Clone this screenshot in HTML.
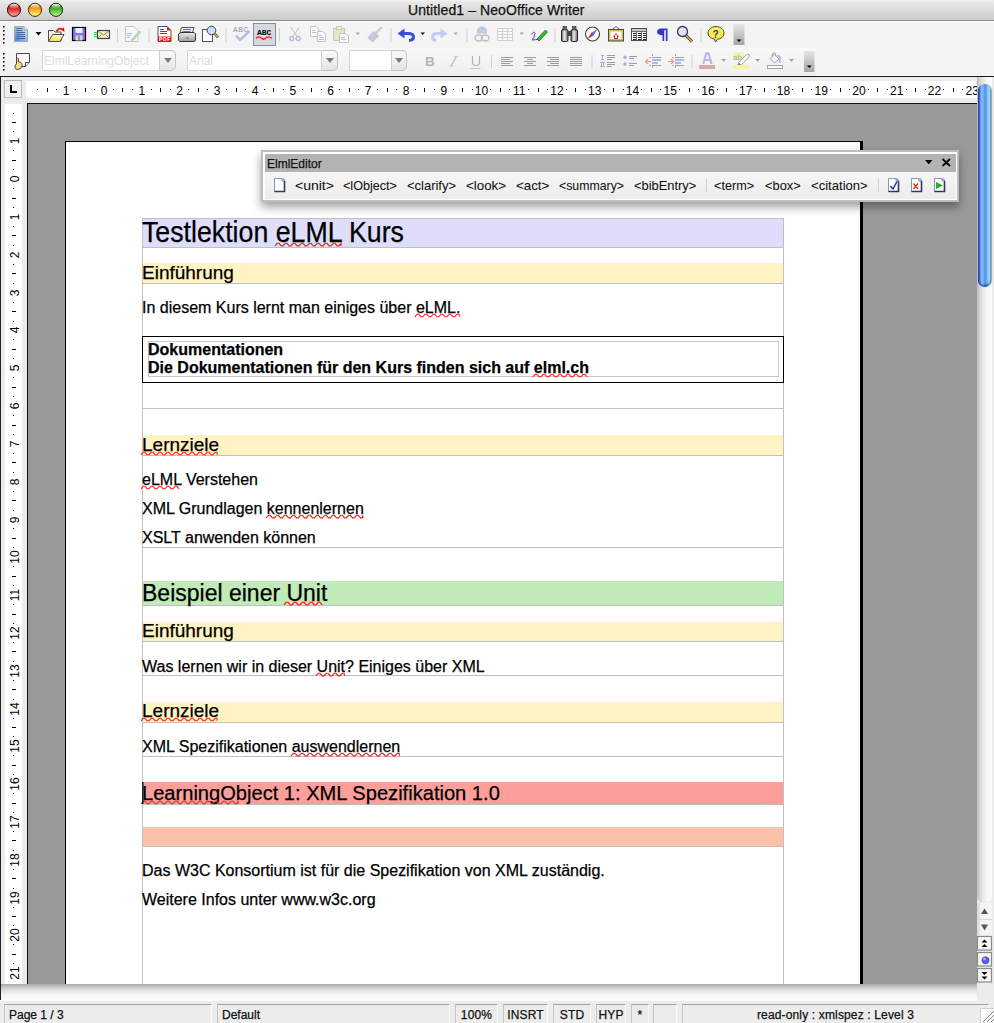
<!DOCTYPE html><html><head><meta charset="utf-8"><style>
*{box-sizing:border-box}
body{margin:0;width:994px;height:1023px;overflow:hidden;position:relative;background:#ececec;font-family:"Liberation Sans",sans-serif;color:#000}
.ab{position:absolute}
.t{position:absolute;white-space:pre;line-height:1;-webkit-text-stroke:0.25px currentColor}
</style></head><body>

<div class="ab" style="left:0;top:0;width:994px;height:20px;border-radius:5px 5px 0 0;background:linear-gradient(#f3f3f3 0,#e8e8e8 2px,#cdcdcd 19px)"></div>
<div class="ab" style="left:0;top:20px;width:994px;height:1px;background:#8a8a8a"></div>
<svg class="ab" style="left:0;top:0" width="70" height="20" viewBox="0 0 70 20"><defs><linearGradient id="tlr" x1="0" y1="0" x2="0" y2="1"><stop offset="0" stop-color="#a01010"/><stop offset=".45" stop-color="#d83030"/><stop offset="1" stop-color="#ffb0a0"/></linearGradient><linearGradient id="tlo" x1="0" y1="0" x2="0" y2="1"><stop offset="0" stop-color="#b05a00"/><stop offset=".45" stop-color="#f0a020"/><stop offset="1" stop-color="#ffff80"/></linearGradient><linearGradient id="tlg" x1="0" y1="0" x2="0" y2="1"><stop offset="0" stop-color="#1a6a10"/><stop offset=".45" stop-color="#48b030"/><stop offset="1" stop-color="#c0ff90"/></linearGradient><linearGradient id="tlh" x1="0" y1="0" x2="0" y2="1"><stop offset="0" stop-color="#fff" stop-opacity=".95"/><stop offset="1" stop-color="#fff" stop-opacity="0"/></linearGradient></defs><circle cx="14" cy="9.8" r="6.6" fill="url(#tlr)" stroke="#3a0404" stroke-width="1"/><ellipse cx="14" cy="6.3" rx="4.2" ry="2.6" fill="url(#tlh)"/><circle cx="35" cy="9.8" r="6.6" fill="url(#tlo)" stroke="#4a2400" stroke-width="1"/><ellipse cx="35" cy="6.3" rx="4.2" ry="2.6" fill="url(#tlh)"/><circle cx="56" cy="9.8" r="6.6" fill="url(#tlg)" stroke="#083006" stroke-width="1"/><ellipse cx="56" cy="6.3" rx="4.2" ry="2.6" fill="url(#tlh)"/></svg>
<div class="t" style="left:408px;top:3px;font-size:14px;letter-spacing:0.1px;color:#111">Untitled1 – NeoOffice Writer</div>
<div class="ab" style="left:0;top:21px;width:994px;height:55px;background:#f4f4f4;border-top:1px solid #fdfdfd"></div>
<div class="ab" style="left:0;top:48px;width:816px;height:28px;background:linear-gradient(#f8f8f8,#efefef)"></div>
<div class="ab" style="left:0;top:76px;width:994px;height:1px;background:#1a1a1a"></div>
<div class="ab" style="left:42px;top:50px;width:134px;height:21px;background:#fff;border:1px solid #d4d4d4;border-radius:0 5px 5px 0"></div>
<div class="ab" style="left:159px;top:50px;width:17px;height:21px;background:linear-gradient(#fafafa,#e4e4e4);border:1px solid #c4c4c4;border-left:1px solid #cfcfcf;border-radius:0 5px 5px 0"></div>
<div class="ab" style="left:163.5px;top:58px;width:0;height:0;border-left:4px solid transparent;border-right:4px solid transparent;border-top:5px solid #7a7a7a"></div>
<div class="t" style="left:44px;top:55px;font-size:12px;color:#dcdcdc;-webkit-text-stroke:0">ElmlLearningObject</div>
<div class="ab" style="left:187px;top:50px;width:151px;height:21px;background:#fff;border:1px solid #d4d4d4;border-radius:0 5px 5px 0"></div>
<div class="ab" style="left:321px;top:50px;width:17px;height:21px;background:linear-gradient(#fafafa,#e4e4e4);border:1px solid #c4c4c4;border-left:1px solid #cfcfcf;border-radius:0 5px 5px 0"></div>
<div class="ab" style="left:325.5px;top:58px;width:0;height:0;border-left:4px solid transparent;border-right:4px solid transparent;border-top:5px solid #7a7a7a"></div>
<div class="t" style="left:189px;top:55px;font-size:12px;color:#dcdcdc;-webkit-text-stroke:0">Arial</div>
<div class="ab" style="left:349px;top:50px;width:58px;height:21px;background:#fff;border:1px solid #d4d4d4;border-radius:0 5px 5px 0"></div>
<div class="ab" style="left:391px;top:50px;width:16px;height:21px;background:linear-gradient(#fafafa,#e4e4e4);border:1px solid #c4c4c4;border-left:1px solid #cfcfcf;border-radius:0 5px 5px 0"></div>
<div class="ab" style="left:395.0px;top:58px;width:0;height:0;border-left:4px solid transparent;border-right:4px solid transparent;border-top:5px solid #7a7a7a"></div>
<svg class="ab" style="left:0;top:0" width="994" height="80" viewBox="0 0 994 80"><defs>
<linearGradient id="gNew" x1="1" y1="0" x2="0" y2="1"><stop offset="0" stop-color="#e4ecfa"/><stop offset="1" stop-color="#3f86f2"/></linearGradient>
<linearGradient id="gFold" x1="0" y1="0" x2="0" y2="1"><stop offset="0" stop-color="#fbf6c8"/><stop offset="1" stop-color="#efe060"/></linearGradient>
<linearGradient id="gBin" x1="0" y1="0" x2="1" y2="0"><stop offset="0" stop-color="#666"/><stop offset=".45" stop-color="#e8e8ec"/><stop offset="1" stop-color="#707078"/></linearGradient>
<linearGradient id="gOv" x1="0" y1="0" x2="0" y2="1"><stop offset="0" stop-color="#e6e6e6"/><stop offset="1" stop-color="#a4a4a4"/></linearGradient>
<linearGradient id="gPr" x1="0" y1="0" x2="0" y2="1"><stop offset="0" stop-color="#f0f0f4"/><stop offset="1" stop-color="#9a9aa4"/></linearGradient>
</defs><rect x="3" y="26" width="1.6" height="1.6" fill="#111"/><rect x="3" y="30" width="1.6" height="1.6" fill="#111"/><rect x="3" y="34" width="1.6" height="1.6" fill="#111"/><rect x="3" y="38" width="1.6" height="1.6" fill="#111"/><rect x="3" y="42" width="1.6" height="1.6" fill="#111"/><rect x="3" y="53" width="1.6" height="1.6" fill="#111"/><rect x="3" y="57" width="1.6" height="1.6" fill="#111"/><rect x="3" y="61" width="1.6" height="1.6" fill="#111"/><rect x="3" y="65" width="1.6" height="1.6" fill="#111"/><rect x="3" y="69" width="1.6" height="1.6" fill="#111"/><rect x="117" y="28" width="1" height="14" fill="#cfcfcf"/><rect x="148.5" y="28" width="1" height="14" fill="#cfcfcf"/><rect x="225.5" y="28" width="1" height="14" fill="#cfcfcf"/><rect x="279" y="28" width="1" height="14" fill="#cfcfcf"/><rect x="390.5" y="28" width="1" height="14" fill="#cfcfcf"/><rect x="466.5" y="28" width="1" height="14" fill="#cfcfcf"/><rect x="554.5" y="28" width="1" height="14" fill="#cfcfcf"/><rect x="700.5" y="28" width="1" height="14" fill="#cfcfcf"/><rect x="491" y="55" width="1" height="13" fill="#cfcfcf"/><rect x="591.5" y="55" width="1" height="13" fill="#cfcfcf"/><rect x="691.5" y="55" width="1" height="13" fill="#cfcfcf"/><path d="M14.5 26.5H24L27.5 30V41.5H14.5Z" fill="url(#gNew)" stroke="#a4a4a4"/><path d="M24 26.5V30H27.5" fill="#e8e8e8" stroke="#a4a4a4"/><path d="M16.5 28.5H22.5" stroke="#1e2a50" stroke-width="1" opacity=".6"/><path d="M16.5 30.5H22.5" stroke="#1e2a50" stroke-width="1" opacity=".6"/><path d="M16.5 32.5H25" stroke="#1e2a50" stroke-width="1" opacity=".6"/><path d="M16.5 34.5H25" stroke="#1e2a50" stroke-width="1" opacity=".6"/><path d="M16.5 36.5H25" stroke="#1e2a50" stroke-width="1" opacity=".6"/><path d="M16.5 38.5H25" stroke="#1e2a50" stroke-width="1" opacity=".6"/><path d="M35.5 32H41.5L38.5 35.5Z" fill="#000"/><path d="M48.5 30.5h5l1.5 1.5h6v9h-12.5z" fill="#fbf6d0" stroke="#4a4a60"/><path d="M48.5 41.5L52.5 34.5H64L60 41.5Z" fill="url(#gFold)" stroke="#4a4a60"/><path d="M56.5 31.5Q59.5 26.5 62.5 30" stroke="#e01010" stroke-width="1.6" fill="none"/><path d="M60.5 29.5L64.5 32L64 27.5Z" fill="#e01010"/><rect x="72.5" y="27.5" width="13" height="13" fill="#7a78ee" stroke="#000" stroke-width="1.2"/><rect x="75.5" y="28" width="7" height="5" fill="#eeeeee"/><rect x="75.5" y="35.5" width="7" height="5" fill="#d8d8d8"/><rect x="78.5" y="36" width="1" height="4.5" fill="#555"/><rect x="97.5" y="30.5" width="12" height="8" fill="#f6f2c0" stroke="#40445a" stroke-width="1.2"/><path d="M97.5 30.5L103.5 35L109.5 30.5M97.5 38.5L101.5 34.5M109.5 38.5L105.5 34.5" stroke="#70705a" fill="none" stroke-width=".8"/><path d="M94 32.5h3M94 34.5h3M94 36.5h3" stroke="#22dd22" stroke-width="1.2"/><path d="M125.5 26.5H134L138 30.5V41.5H125.5Z" fill="#f7f7f7" stroke="#c4c4c4"/><path d="M127 33.5H132M127 35.5H131M127 37.5H130" stroke="#b8b8e4" stroke-width="1"/><path d="M131 40L139.5 31L140.8 32.3L132.3 41.3Z" fill="#a4e0a4" stroke="#b8c8b8" stroke-width=".8"/><path d="M158 26.5H167L171 30.5V41.5H158Z" fill="#fff" stroke="#505060"/><path d="M167 26.5L171 30.5H167Z" fill="#d81818"/><path d="M160 29.5h4M160 31.5h7M160 33.5h7" stroke="#4444cc" stroke-width="1"/><rect x="158" y="36.5" width="13" height="5" fill="#e81010"/><text x="159" y="41" font-family="Liberation Sans" font-weight="bold" font-size="5" fill="#fff" letter-spacing=".6">PDF</text><path d="M181.5 27.5H194L192.5 32.5H180Z" fill="#eef0ff" stroke="#404050" stroke-width=".9"/><path d="M183 29.5h8M182.5 31.5h8" stroke="#4444cc" stroke-width=".8"/><path d="M178.5 34L181 32.5H194L195.5 34V40.5L194 41.5H179.5L178.5 40.5Z" fill="url(#gPr)" stroke="#333" stroke-width="1"/><rect x="186.5" y="37" width="2" height="1.6" fill="#10c010"/><rect x="202.5" y="29.5" width="10" height="12" fill="#fff" stroke="#555"/><path d="M214.5 33.5L218 37.5" stroke="#444" stroke-width="2.6"/><path d="M214.5 33.5L218 37.5" stroke="#e0a030" stroke-width="1.4"/><circle cx="211.5" cy="30.5" r="4.3" fill="#cfdcff" stroke="#445" stroke-width="1"/><text x="233" y="31.5" font-family="Liberation Sans" font-weight="bold" font-size="6.5" fill="#a8a8a8" letter-spacing=".5">ABC</text><path d="M236 35.5L240 40L249.5 31" stroke="#b8b8e8" stroke-width="2.6" fill="none"/><rect x="253.5" y="23.5" width="22" height="22" fill="#d6d9df" stroke="#8090a8" stroke-width="1"/><text x="257" y="35" font-family="Liberation Mono" font-weight="bold" font-size="8" fill="#000">ABC</text><path d="M256 38.5Q258.5 35.5 261 38Q263.5 40.5 266 38Q268.5 35.5 272 38.5" stroke="#ff1010" stroke-width="1.2" fill="none"/><path d="M290.5 27L297.5 37M299.5 27L292.5 37" stroke="#c8c8c8" stroke-width="1.2"/><circle cx="291.8" cy="38.5" r="2" fill="none" stroke="#b8b8e4" stroke-width="1.4"/><circle cx="298.2" cy="38.5" r="2" fill="none" stroke="#b8b8e4" stroke-width="1.4"/><path d="M310.5 26.5H316L318.5 29V36.5H310.5Z" fill="#fafafa" stroke="#c4c4c4"/><path d="M312 30.5h3M312 32.5h4" stroke="#b8b8e4"/><path d="M317.5 31.5H323L325.5 34V41.5H317.5Z" fill="#fafafa" stroke="#c4c4c4"/><path d="M319 35.5h3M319 37.5h5M319 39.5h5" stroke="#b8b8e4"/><rect x="333.5" y="28.5" width="11" height="12" fill="#e9e1c9" stroke="#cfc7b0"/><rect x="336.5" y="26.5" width="5" height="3" fill="#f4eed8" stroke="#cfc7b0"/><path d="M339.5 33.5H346L348.5 36V42.5H339.5Z" fill="#fafafa" stroke="#c4c4c4"/><path d="M341 37.5h4M341 39.5h5" stroke="#b8b8e4"/><path d="M355.5 32.5H360L357.75 35Z" fill="#a8a8a8"/><path d="M376 33L382 27" stroke="#d4ccb0" stroke-width="2.2"/><path d="M368 37.5L374 31.5L378.5 36L372.5 42Z" fill="#c4c8e8" stroke="#b8b8c4" stroke-width=".8"/><path d="M404.5 28.5L397.5 33.5L404.5 38.5Z" fill="#3d4fd6"/><path d="M403 33.5H408Q413.5 33.5 413.5 37Q413.5 40 409 40.5" stroke="#3d4fd6" stroke-width="3" fill="none"/><path d="M420.5 32.5H425L422.75 35Z" fill="#000"/><path d="M440.5 28.5L447.5 33.5L440.5 38.5Z" fill="#c4caf2"/><path d="M442 33.5H437Q432.5 33.5 432.5 37Q432.5 40 436 40.5" stroke="#c4caf2" stroke-width="3" fill="none"/><path d="M453.5 32.5H458L455.75 35Z" fill="#a8a8a8"/><path d="M477 33.5V31.5A5 5 0 0 1 487 31.5V33.5Z" fill="#c4bcec"/><path d="M479 28.5L483 32M481 33L485 29.5" stroke="#a8f0b0" stroke-width="1.2"/><ellipse cx="478.8" cy="38" rx="3.8" ry="3" fill="none" stroke="#c0c0c0" stroke-width="1.5"/><ellipse cx="485.2" cy="38" rx="3.8" ry="3" fill="none" stroke="#c0c0c0" stroke-width="1.5"/><rect x="497.5" y="28.5" width="15" height="12" fill="#fafafa" stroke="#d0d0d0"/><path d="M497.5 31.5h15M497.5 34.5h15M497.5 37.5h15M502.5 28.5v12M507.5 28.5v12" stroke="#d0d0d0"/><path d="M519.5 32.5H524L521.75 35Z" fill="#a0a0a0"/><path d="M537 39L545.5 30L547.5 32L539 41Z" fill="#30c030" stroke="#186018" stroke-width=".8"/><path d="M531.5 34.5Q534 30.5 535 33.5Q534 38.5 532 40Q536 40 538 39" stroke="#5038c0" stroke-width="1" fill="none"/><rect x="561.5" y="29.5" width="6.5" height="12" rx="1.5" fill="url(#gBin)" stroke="#222"/><rect x="571" y="29.5" width="6.5" height="12" rx="1.5" fill="url(#gBin)" stroke="#222"/><rect x="563" y="26.5" width="3.5" height="3.5" fill="#666" stroke="#222" stroke-width=".6"/><rect x="572.5" y="26.5" width="3.5" height="3.5" fill="#666" stroke="#222" stroke-width=".6"/><rect x="567.5" y="31" width="4" height="5" fill="#444"/><circle cx="592.5" cy="34" r="7" fill="#fff" stroke="#3a3a4a" stroke-width="1.1"/><path d="M587.5 39L591.5 32.5L594 35Z" fill="#e82020"/><path d="M597.5 29L593.5 35.5L591 33Z" fill="#6070f0"/><path d="M612 29.5L616 26.5L620 29.5" stroke="#555" fill="none" stroke-width=".8"/><rect x="608.5" y="29.5" width="15" height="11.5" fill="#dcbc50" stroke="#4a4a40"/><rect x="610.5" y="31.5" width="11" height="7.5" fill="#fff"/><path d="M613.5 36.5L616 33.5L618.5 36.5M614.5 36v2.5h3V36" stroke="#d02020" fill="none" stroke-width="1"/><rect x="631.5" y="28.5" width="15" height="12" fill="#fff" stroke="#4a4a58"/><rect x="632" y="29" width="14" height="2" fill="#c8c8d4"/><path d="M631.5 31.5h15M636.5 31.5v9M641.5 31.5v9" stroke="#6a6a78" stroke-width="1"/><rect x="633" y="33" width="3" height="1" fill="#222"/><rect x="638" y="33" width="3" height="1" fill="#222"/><rect x="643" y="33" width="3" height="1" fill="#222"/><rect x="633" y="35" width="3" height="1" fill="#222"/><rect x="638" y="35" width="3" height="1" fill="#222"/><rect x="643" y="35" width="3" height="1" fill="#222"/><rect x="633" y="37" width="3" height="1" fill="#222"/><rect x="638" y="37" width="3" height="1" fill="#222"/><rect x="643" y="37" width="3" height="1" fill="#222"/><rect x="633" y="39" width="3" height="1" fill="#222"/><rect x="638" y="39" width="3" height="1" fill="#222"/><rect x="643" y="39" width="3" height="1" fill="#222"/><path d="M661 28.5H667.5V41H665.8V30.2H664.2V41H662.5V35.2C659.3 35.2 657 33.8 657 31.9C657 29.8 658.6 28.5 661 28.5Z" fill="#3535c8"/><path d="M686 35.5L692 41.5" stroke="#444" stroke-width="3"/><path d="M686 35.5L692 41.5" stroke="#e8a030" stroke-width="1.6"/><circle cx="682.5" cy="31.5" r="5" fill="#dae4ff" stroke="#3a3a4a" stroke-width="1.3"/><path d="M716 26.5C720.5 26.5 724 29.5 724 33C724 36.5 721 39 717.5 39.2L715.5 42L714.5 39C710.5 38.5 708 36 708 33C708 29.5 711.5 26.5 716 26.5Z" fill="#f6f040" stroke="#333" stroke-width=".9"/><text x="712.5" y="37.5" font-family="Liberation Sans" font-weight="bold" font-size="10" fill="#3030c0">?</text><rect x="733.5" y="24" width="11" height="21" fill="url(#gOv)"/><path d="M736.5 39.5H741.5L739 42Z" fill="#000"/><path d="M16.5 53.5H29.5V62.5L25.5 66.5H16.5Z" fill="#fff" stroke="#4a4a5a"/><path d="M25.5 66.5V62.5H29.5" stroke="#4a4a5a" fill="#e8e8f0"/><path d="M17 69.5C15.5 69 14.5 67.5 15 66L16.5 63.5V58.5Q17.5 57.5 18.5 58.5V62L21 62.5Q22.5 63.5 22 66Q21.5 69.5 17 69.5Z" fill="#f8d888" stroke="#332a10" stroke-width=".8"/><text x="425" y="66" font-family="Liberation Sans" font-weight="bold" font-size="13.5" fill="#b4b4b4">B</text><path d="M456.5 56.5L451 66" stroke="#b4b4b4" stroke-width="1.2"/><path d="M453.5 56.5h5M449 66h5" stroke="#c8c8c8" stroke-width=".8"/><path d="M472.5 56v6q0 3.5 3.5 3.5t3.5-3.5v-6" fill="none" stroke="#b4b4b4" stroke-width="1.2"/><path d="M470.5 68.5h10" stroke="#c8c8c8" stroke-width="1"/><rect x="501" y="57" width="12" height="1" fill="#9c9c9c"/><rect x="501" y="59" width="9" height="1" fill="#9c9c9c"/><rect x="501" y="61" width="12" height="1" fill="#9c9c9c"/><rect x="501" y="63" width="9" height="1" fill="#9c9c9c"/><rect x="501" y="65" width="12" height="1" fill="#9c9c9c"/><rect x="524" y="57" width="12" height="1" fill="#9c9c9c"/><rect x="527" y="59" width="6" height="1" fill="#9c9c9c"/><rect x="524" y="61" width="12" height="1" fill="#9c9c9c"/><rect x="527" y="63" width="6" height="1" fill="#9c9c9c"/><rect x="524" y="65" width="12" height="1" fill="#9c9c9c"/><rect x="547" y="57" width="12" height="1" fill="#9c9c9c"/><rect x="550" y="59" width="9" height="1" fill="#9c9c9c"/><rect x="547" y="61" width="12" height="1" fill="#9c9c9c"/><rect x="550" y="63" width="9" height="1" fill="#9c9c9c"/><rect x="547" y="65" width="12" height="1" fill="#9c9c9c"/><rect x="570" y="57" width="12" height="1" fill="#9c9c9c"/><rect x="570" y="59" width="12" height="1" fill="#9c9c9c"/><rect x="570" y="61" width="12" height="1" fill="#9c9c9c"/><rect x="570" y="63" width="12" height="1" fill="#9c9c9c"/><rect x="570" y="65" width="12" height="1" fill="#9c9c9c"/><path d="M601 55.5h3M602.5 55.5v4M601 59.5h3" stroke="#b4a8e0" stroke-width="1" fill="none"/><path d="M600 62.5h5M601.5 62.5v4M603.5 62.5v4M600 66.5h5" stroke="#b4a8e0" stroke-width="1" fill="none"/><rect x="607" y="55" width="8" height="1" fill="#9c9c9c"/><rect x="607" y="57" width="8" height="1" fill="#9c9c9c"/><rect x="607" y="59" width="5" height="1" fill="#9c9c9c"/><rect x="607" y="62" width="8" height="1" fill="#9c9c9c"/><rect x="607" y="64" width="8" height="1" fill="#9c9c9c"/><rect x="607" y="66" width="5" height="1" fill="#9c9c9c"/><circle cx="625" cy="57.2" r="1.7" fill="#b0a8e4"/><circle cx="625" cy="64" r="1.7" fill="#b0a8e4"/><rect x="629" y="56" width="8" height="1" fill="#9c9c9c"/><rect x="629" y="58" width="5" height="1" fill="#9c9c9c"/><rect x="629" y="63" width="8" height="1" fill="#9c9c9c"/><rect x="629" y="65" width="5" height="1" fill="#9c9c9c"/><rect x="652" y="54" width="1" height="2" fill="#a8a8a8"/><rect x="652" y="66" width="1" height="2" fill="#a8a8a8"/><rect x="649" y="57" width="2" height="1" fill="#b0b0b0"/><rect x="652" y="57" width="9" height="1" fill="#a0a0a0"/><rect x="652" y="59" width="9" height="2" fill="#b8b4ec"/><rect x="652" y="62" width="6" height="2" fill="#b8b4ec"/><rect x="649" y="65" width="2" height="1" fill="#b0b0b0"/><rect x="652" y="65" width="9" height="1" fill="#a0a0a0"/><rect x="675" y="54" width="1" height="2" fill="#a8a8a8"/><rect x="675" y="66" width="1" height="2" fill="#a8a8a8"/><rect x="672" y="57" width="2" height="1" fill="#b0b0b0"/><rect x="675" y="57" width="9" height="1" fill="#a0a0a0"/><rect x="675" y="59" width="9" height="2" fill="#b8b4ec"/><rect x="675" y="62" width="6" height="2" fill="#b8b4ec"/><rect x="672" y="65" width="2" height="1" fill="#b0b0b0"/><rect x="675" y="65" width="9" height="1" fill="#a0a0a0"/><path d="M645.5 61.5H651M648 59L645.5 61.5L648 64" stroke="#f09090" stroke-width="1.1" fill="none"/><path d="M668 61.5H673.5M671 59L673.5 61.5L671 64" stroke="#f09090" stroke-width="1.1" fill="none"/><path d="M703.2 64L706.2 53.5H708.6L711.6 64M704.6 60H710.2" stroke="#b8b4ec" stroke-width="2" fill="none"/><path d="M705 53.5h4.5" stroke="#b8b4ec" stroke-width="1.5"/><rect x="699" y="65" width="16" height="4" fill="#d8a8a8"/><path d="M721 59H726.2L723.6 61.8Z" fill="#a0a0a0"/><rect x="733" y="52.5" width="11" height="7.5" fill="#f4f2a8"/><text x="733" y="59.5" font-family="Liberation Sans" font-size="8" fill="#a8a8a8">ab</text><path d="M738.5 62.5L746.5 54.5Q748 53.5 749.2 54.8Q750 56 749 57.2L741 65.2Z" fill="#f8f8f8" stroke="#a8a8a8" stroke-width="1"/><path d="M738.5 62.5L737 66L741 65.2Z" fill="#888"/><rect x="733" y="65" width="16" height="4" fill="#f4f2a8"/><path d="M755 59H760.2L757.6 61.8Z" fill="#a0a0a0"/><path d="M770 58.5L774.5 54.5L779 59L774.5 63Z" fill="#fafafa" stroke="#a0a0a0" stroke-width="1"/><path d="M772 56.5Q771.5 53 774 52.8Q776 53 775.5 55" stroke="#a0a0a0" fill="none" stroke-width="1"/><path d="M776.5 55.5Q780 55.5 780 58V63" stroke="#b8b4ec" fill="none" stroke-width="1.6"/><rect x="767.5" y="65.5" width="15" height="3" fill="#fafafa" stroke="#a4a4a4" stroke-width="1"/><path d="M789 59H794.2L791.6 61.8Z" fill="#a0a0a0"/><rect x="804" y="51" width="10.5" height="21" fill="url(#gOv)"/><path d="M806.8 65.5H811.8L809.3 68Z" fill="#000"/></svg>
<div class="ab" style="left:0;top:77px;width:994px;height:26px;background:#ebebeb"></div>
<div class="ab" style="left:4px;top:80px;width:18px;height:18px;border:1px solid #b8b8b8;background:#f0f0f0"></div>
<div class="ab" style="left:10px;top:85px;width:2px;height:8px;background:#000"></div><div class="ab" style="left:10px;top:91px;width:7px;height:2px;background:#000"></div>
<div class="ab" style="left:26px;top:81px;width:951px;height:17px;background:#fff"></div>
<div class="ab" style="left:37.4px;top:89px;width:1px;height:1px;background:#000"></div><div class="ab" style="left:46.9px;top:88px;width:1px;height:4px;background:#000"></div><div class="ab" style="left:56.3px;top:89px;width:1px;height:1px;background:#000"></div><div class="ab" style="left:75.2px;top:89px;width:1px;height:1px;background:#000"></div><div class="ab" style="left:84.6px;top:88px;width:1px;height:4px;background:#000"></div><div class="ab" style="left:94.1px;top:89px;width:1px;height:1px;background:#000"></div><div class="ab" style="left:112.9px;top:89px;width:1px;height:1px;background:#000"></div><div class="ab" style="left:122.4px;top:88px;width:1px;height:4px;background:#000"></div><div class="ab" style="left:131.8px;top:89px;width:1px;height:1px;background:#000"></div><div class="ab" style="left:150.7px;top:89px;width:1px;height:1px;background:#000"></div><div class="ab" style="left:160.1px;top:88px;width:1px;height:4px;background:#000"></div><div class="ab" style="left:169.6px;top:89px;width:1px;height:1px;background:#000"></div><div class="ab" style="left:188.4px;top:89px;width:1px;height:1px;background:#000"></div><div class="ab" style="left:197.9px;top:88px;width:1px;height:4px;background:#000"></div><div class="ab" style="left:207.3px;top:89px;width:1px;height:1px;background:#000"></div><div class="ab" style="left:226.2px;top:89px;width:1px;height:1px;background:#000"></div><div class="ab" style="left:235.6px;top:88px;width:1px;height:4px;background:#000"></div><div class="ab" style="left:245.1px;top:89px;width:1px;height:1px;background:#000"></div><div class="ab" style="left:263.9px;top:89px;width:1px;height:1px;background:#000"></div><div class="ab" style="left:273.4px;top:88px;width:1px;height:4px;background:#000"></div><div class="ab" style="left:282.8px;top:89px;width:1px;height:1px;background:#000"></div><div class="ab" style="left:301.7px;top:89px;width:1px;height:1px;background:#000"></div><div class="ab" style="left:311.1px;top:88px;width:1px;height:4px;background:#000"></div><div class="ab" style="left:320.6px;top:89px;width:1px;height:1px;background:#000"></div><div class="ab" style="left:339.4px;top:89px;width:1px;height:1px;background:#000"></div><div class="ab" style="left:348.9px;top:88px;width:1px;height:4px;background:#000"></div><div class="ab" style="left:358.3px;top:89px;width:1px;height:1px;background:#000"></div><div class="ab" style="left:377.2px;top:89px;width:1px;height:1px;background:#000"></div><div class="ab" style="left:386.6px;top:88px;width:1px;height:4px;background:#000"></div><div class="ab" style="left:396.1px;top:89px;width:1px;height:1px;background:#000"></div><div class="ab" style="left:414.9px;top:89px;width:1px;height:1px;background:#000"></div><div class="ab" style="left:424.4px;top:88px;width:1px;height:4px;background:#000"></div><div class="ab" style="left:433.8px;top:89px;width:1px;height:1px;background:#000"></div><div class="ab" style="left:452.7px;top:89px;width:1px;height:1px;background:#000"></div><div class="ab" style="left:462.1px;top:88px;width:1px;height:4px;background:#000"></div><div class="ab" style="left:471.6px;top:89px;width:1px;height:1px;background:#000"></div><div class="ab" style="left:490.4px;top:89px;width:1px;height:1px;background:#000"></div><div class="ab" style="left:499.9px;top:88px;width:1px;height:4px;background:#000"></div><div class="ab" style="left:509.3px;top:89px;width:1px;height:1px;background:#000"></div><div class="ab" style="left:528.2px;top:89px;width:1px;height:1px;background:#000"></div><div class="ab" style="left:537.6px;top:88px;width:1px;height:4px;background:#000"></div><div class="ab" style="left:547.1px;top:89px;width:1px;height:1px;background:#000"></div><div class="ab" style="left:565.9px;top:89px;width:1px;height:1px;background:#000"></div><div class="ab" style="left:575.4px;top:88px;width:1px;height:4px;background:#000"></div><div class="ab" style="left:584.8px;top:89px;width:1px;height:1px;background:#000"></div><div class="ab" style="left:603.7px;top:89px;width:1px;height:1px;background:#000"></div><div class="ab" style="left:613.1px;top:88px;width:1px;height:4px;background:#000"></div><div class="ab" style="left:622.6px;top:89px;width:1px;height:1px;background:#000"></div><div class="ab" style="left:641.4px;top:89px;width:1px;height:1px;background:#000"></div><div class="ab" style="left:650.9px;top:88px;width:1px;height:4px;background:#000"></div><div class="ab" style="left:660.3px;top:89px;width:1px;height:1px;background:#000"></div><div class="ab" style="left:679.2px;top:89px;width:1px;height:1px;background:#000"></div><div class="ab" style="left:688.6px;top:88px;width:1px;height:4px;background:#000"></div><div class="ab" style="left:698.1px;top:89px;width:1px;height:1px;background:#000"></div><div class="ab" style="left:716.9px;top:89px;width:1px;height:1px;background:#000"></div><div class="ab" style="left:726.4px;top:88px;width:1px;height:4px;background:#000"></div><div class="ab" style="left:735.8px;top:89px;width:1px;height:1px;background:#000"></div><div class="ab" style="left:754.7px;top:89px;width:1px;height:1px;background:#000"></div><div class="ab" style="left:764.1px;top:88px;width:1px;height:4px;background:#000"></div><div class="ab" style="left:773.6px;top:89px;width:1px;height:1px;background:#000"></div><div class="ab" style="left:792.4px;top:89px;width:1px;height:1px;background:#000"></div><div class="ab" style="left:801.9px;top:88px;width:1px;height:4px;background:#000"></div><div class="ab" style="left:811.3px;top:89px;width:1px;height:1px;background:#000"></div><div class="ab" style="left:830.2px;top:89px;width:1px;height:1px;background:#000"></div><div class="ab" style="left:839.6px;top:88px;width:1px;height:4px;background:#000"></div><div class="ab" style="left:849.1px;top:89px;width:1px;height:1px;background:#000"></div><div class="ab" style="left:867.9px;top:89px;width:1px;height:1px;background:#000"></div><div class="ab" style="left:877.4px;top:88px;width:1px;height:4px;background:#000"></div><div class="ab" style="left:886.8px;top:89px;width:1px;height:1px;background:#000"></div><div class="ab" style="left:905.7px;top:89px;width:1px;height:1px;background:#000"></div><div class="ab" style="left:915.1px;top:88px;width:1px;height:4px;background:#000"></div><div class="ab" style="left:924.6px;top:89px;width:1px;height:1px;background:#000"></div><div class="ab" style="left:943.4px;top:89px;width:1px;height:1px;background:#000"></div><div class="ab" style="left:952.9px;top:88px;width:1px;height:4px;background:#000"></div><div class="ab" style="left:962.3px;top:89px;width:1px;height:1px;background:#000"></div><div class="t" style="left:46.2px;top:85px;width:40px;text-align:center;font-size:12px;-webkit-text-stroke:0">1</div><div class="t" style="left:84.0px;top:85px;width:40px;text-align:center;font-size:12px;-webkit-text-stroke:0">0</div><div class="t" style="left:121.8px;top:85px;width:40px;text-align:center;font-size:12px;-webkit-text-stroke:0">1</div><div class="t" style="left:159.5px;top:85px;width:40px;text-align:center;font-size:12px;-webkit-text-stroke:0">2</div><div class="t" style="left:197.2px;top:85px;width:40px;text-align:center;font-size:12px;-webkit-text-stroke:0">3</div><div class="t" style="left:235.0px;top:85px;width:40px;text-align:center;font-size:12px;-webkit-text-stroke:0">4</div><div class="t" style="left:272.8px;top:85px;width:40px;text-align:center;font-size:12px;-webkit-text-stroke:0">5</div><div class="t" style="left:310.5px;top:85px;width:40px;text-align:center;font-size:12px;-webkit-text-stroke:0">6</div><div class="t" style="left:348.2px;top:85px;width:40px;text-align:center;font-size:12px;-webkit-text-stroke:0">7</div><div class="t" style="left:386.0px;top:85px;width:40px;text-align:center;font-size:12px;-webkit-text-stroke:0">8</div><div class="t" style="left:423.8px;top:85px;width:40px;text-align:center;font-size:12px;-webkit-text-stroke:0">9</div><div class="t" style="left:461.5px;top:85px;width:40px;text-align:center;font-size:12px;-webkit-text-stroke:0">10</div><div class="t" style="left:499.2px;top:85px;width:40px;text-align:center;font-size:12px;-webkit-text-stroke:0">11</div><div class="t" style="left:537.0px;top:85px;width:40px;text-align:center;font-size:12px;-webkit-text-stroke:0">12</div><div class="t" style="left:574.8px;top:85px;width:40px;text-align:center;font-size:12px;-webkit-text-stroke:0">13</div><div class="t" style="left:612.5px;top:85px;width:40px;text-align:center;font-size:12px;-webkit-text-stroke:0">14</div><div class="t" style="left:650.2px;top:85px;width:40px;text-align:center;font-size:12px;-webkit-text-stroke:0">15</div><div class="t" style="left:688.0px;top:85px;width:40px;text-align:center;font-size:12px;-webkit-text-stroke:0">16</div><div class="t" style="left:725.8px;top:85px;width:40px;text-align:center;font-size:12px;-webkit-text-stroke:0">17</div><div class="t" style="left:763.5px;top:85px;width:40px;text-align:center;font-size:12px;-webkit-text-stroke:0">18</div><div class="t" style="left:801.2px;top:85px;width:40px;text-align:center;font-size:12px;-webkit-text-stroke:0">19</div><div class="t" style="left:839.0px;top:85px;width:40px;text-align:center;font-size:12px;-webkit-text-stroke:0">20</div><div class="t" style="left:876.8px;top:85px;width:40px;text-align:center;font-size:12px;-webkit-text-stroke:0">21</div><div class="t" style="left:914.5px;top:85px;width:40px;text-align:center;font-size:12px;-webkit-text-stroke:0">22</div><div class="t" style="left:952.2px;top:85px;width:40px;text-align:center;font-size:12px;-webkit-text-stroke:0">23</div>
<div class="ab" style="left:0;top:77px;width:1px;height:923px;background:#222"></div>
<div class="ab" style="left:5px;top:104px;width:17px;height:880px;background:#fff"></div>
<div class="ab" style="left:13px;top:112.5px;width:1px;height:1px;background:#000"></div><div class="ab" style="left:12px;top:122.0px;width:4px;height:1px;background:#000"></div><div class="ab" style="left:13px;top:131.4px;width:1px;height:1px;background:#000"></div><div class="ab" style="left:13px;top:150.3px;width:1px;height:1px;background:#000"></div><div class="ab" style="left:12px;top:159.8px;width:4px;height:1px;background:#000"></div><div class="ab" style="left:13px;top:169.2px;width:1px;height:1px;background:#000"></div><div class="ab" style="left:13px;top:188.2px;width:1px;height:1px;background:#000"></div><div class="ab" style="left:12px;top:197.6px;width:4px;height:1px;background:#000"></div><div class="ab" style="left:13px;top:207.1px;width:1px;height:1px;background:#000"></div><div class="ab" style="left:13px;top:226.0px;width:1px;height:1px;background:#000"></div><div class="ab" style="left:12px;top:235.4px;width:4px;height:1px;background:#000"></div><div class="ab" style="left:13px;top:244.9px;width:1px;height:1px;background:#000"></div><div class="ab" style="left:13px;top:263.8px;width:1px;height:1px;background:#000"></div><div class="ab" style="left:12px;top:273.2px;width:4px;height:1px;background:#000"></div><div class="ab" style="left:13px;top:282.7px;width:1px;height:1px;background:#000"></div><div class="ab" style="left:13px;top:301.6px;width:1px;height:1px;background:#000"></div><div class="ab" style="left:12px;top:311.0px;width:4px;height:1px;background:#000"></div><div class="ab" style="left:13px;top:320.5px;width:1px;height:1px;background:#000"></div><div class="ab" style="left:13px;top:339.4px;width:1px;height:1px;background:#000"></div><div class="ab" style="left:12px;top:348.8px;width:4px;height:1px;background:#000"></div><div class="ab" style="left:13px;top:358.3px;width:1px;height:1px;background:#000"></div><div class="ab" style="left:13px;top:377.2px;width:1px;height:1px;background:#000"></div><div class="ab" style="left:12px;top:386.7px;width:4px;height:1px;background:#000"></div><div class="ab" style="left:13px;top:396.1px;width:1px;height:1px;background:#000"></div><div class="ab" style="left:13px;top:415.0px;width:1px;height:1px;background:#000"></div><div class="ab" style="left:12px;top:424.5px;width:4px;height:1px;background:#000"></div><div class="ab" style="left:13px;top:433.9px;width:1px;height:1px;background:#000"></div><div class="ab" style="left:13px;top:452.8px;width:1px;height:1px;background:#000"></div><div class="ab" style="left:12px;top:462.3px;width:4px;height:1px;background:#000"></div><div class="ab" style="left:13px;top:471.7px;width:1px;height:1px;background:#000"></div><div class="ab" style="left:13px;top:490.6px;width:1px;height:1px;background:#000"></div><div class="ab" style="left:12px;top:500.1px;width:4px;height:1px;background:#000"></div><div class="ab" style="left:13px;top:509.5px;width:1px;height:1px;background:#000"></div><div class="ab" style="left:13px;top:528.4px;width:1px;height:1px;background:#000"></div><div class="ab" style="left:12px;top:537.9px;width:4px;height:1px;background:#000"></div><div class="ab" style="left:13px;top:547.3px;width:1px;height:1px;background:#000"></div><div class="ab" style="left:13px;top:566.3px;width:1px;height:1px;background:#000"></div><div class="ab" style="left:12px;top:575.7px;width:4px;height:1px;background:#000"></div><div class="ab" style="left:13px;top:585.2px;width:1px;height:1px;background:#000"></div><div class="ab" style="left:13px;top:604.1px;width:1px;height:1px;background:#000"></div><div class="ab" style="left:12px;top:613.5px;width:4px;height:1px;background:#000"></div><div class="ab" style="left:13px;top:623.0px;width:1px;height:1px;background:#000"></div><div class="ab" style="left:13px;top:641.9px;width:1px;height:1px;background:#000"></div><div class="ab" style="left:12px;top:651.3px;width:4px;height:1px;background:#000"></div><div class="ab" style="left:13px;top:660.8px;width:1px;height:1px;background:#000"></div><div class="ab" style="left:13px;top:679.7px;width:1px;height:1px;background:#000"></div><div class="ab" style="left:12px;top:689.1px;width:4px;height:1px;background:#000"></div><div class="ab" style="left:13px;top:698.6px;width:1px;height:1px;background:#000"></div><div class="ab" style="left:13px;top:717.5px;width:1px;height:1px;background:#000"></div><div class="ab" style="left:12px;top:726.9px;width:4px;height:1px;background:#000"></div><div class="ab" style="left:13px;top:736.4px;width:1px;height:1px;background:#000"></div><div class="ab" style="left:13px;top:755.3px;width:1px;height:1px;background:#000"></div><div class="ab" style="left:12px;top:764.8px;width:4px;height:1px;background:#000"></div><div class="ab" style="left:13px;top:774.2px;width:1px;height:1px;background:#000"></div><div class="ab" style="left:13px;top:793.1px;width:1px;height:1px;background:#000"></div><div class="ab" style="left:12px;top:802.6px;width:4px;height:1px;background:#000"></div><div class="ab" style="left:13px;top:812.0px;width:1px;height:1px;background:#000"></div><div class="ab" style="left:13px;top:830.9px;width:1px;height:1px;background:#000"></div><div class="ab" style="left:12px;top:840.4px;width:4px;height:1px;background:#000"></div><div class="ab" style="left:13px;top:849.8px;width:1px;height:1px;background:#000"></div><div class="ab" style="left:13px;top:868.7px;width:1px;height:1px;background:#000"></div><div class="ab" style="left:12px;top:878.2px;width:4px;height:1px;background:#000"></div><div class="ab" style="left:13px;top:887.6px;width:1px;height:1px;background:#000"></div><div class="ab" style="left:13px;top:906.5px;width:1px;height:1px;background:#000"></div><div class="ab" style="left:12px;top:916.0px;width:4px;height:1px;background:#000"></div><div class="ab" style="left:13px;top:925.4px;width:1px;height:1px;background:#000"></div><div class="ab" style="left:13px;top:944.4px;width:1px;height:1px;background:#000"></div><div class="ab" style="left:12px;top:953.8px;width:4px;height:1px;background:#000"></div><div class="ab" style="left:13px;top:963.3px;width:1px;height:1px;background:#000"></div><div class="t" style="left:-5px;top:135.4px;width:40px;text-align:center;font-size:12px;-webkit-text-stroke:0;transform:rotate(-90deg)">1</div><div class="t" style="left:-5px;top:173.2px;width:40px;text-align:center;font-size:12px;-webkit-text-stroke:0;transform:rotate(-90deg)">0</div><div class="t" style="left:-5px;top:211.0px;width:40px;text-align:center;font-size:12px;-webkit-text-stroke:0;transform:rotate(-90deg)">1</div><div class="t" style="left:-5px;top:248.8px;width:40px;text-align:center;font-size:12px;-webkit-text-stroke:0;transform:rotate(-90deg)">2</div><div class="t" style="left:-5px;top:286.6px;width:40px;text-align:center;font-size:12px;-webkit-text-stroke:0;transform:rotate(-90deg)">3</div><div class="t" style="left:-5px;top:324.4px;width:40px;text-align:center;font-size:12px;-webkit-text-stroke:0;transform:rotate(-90deg)">4</div><div class="t" style="left:-5px;top:362.2px;width:40px;text-align:center;font-size:12px;-webkit-text-stroke:0;transform:rotate(-90deg)">5</div><div class="t" style="left:-5px;top:400.1px;width:40px;text-align:center;font-size:12px;-webkit-text-stroke:0;transform:rotate(-90deg)">6</div><div class="t" style="left:-5px;top:437.9px;width:40px;text-align:center;font-size:12px;-webkit-text-stroke:0;transform:rotate(-90deg)">7</div><div class="t" style="left:-5px;top:475.7px;width:40px;text-align:center;font-size:12px;-webkit-text-stroke:0;transform:rotate(-90deg)">8</div><div class="t" style="left:-5px;top:513.5px;width:40px;text-align:center;font-size:12px;-webkit-text-stroke:0;transform:rotate(-90deg)">9</div><div class="t" style="left:-5px;top:551.3px;width:40px;text-align:center;font-size:12px;-webkit-text-stroke:0;transform:rotate(-90deg)">10</div><div class="t" style="left:-5px;top:589.1px;width:40px;text-align:center;font-size:12px;-webkit-text-stroke:0;transform:rotate(-90deg)">11</div><div class="t" style="left:-5px;top:626.9px;width:40px;text-align:center;font-size:12px;-webkit-text-stroke:0;transform:rotate(-90deg)">12</div><div class="t" style="left:-5px;top:664.7px;width:40px;text-align:center;font-size:12px;-webkit-text-stroke:0;transform:rotate(-90deg)">13</div><div class="t" style="left:-5px;top:702.5px;width:40px;text-align:center;font-size:12px;-webkit-text-stroke:0;transform:rotate(-90deg)">14</div><div class="t" style="left:-5px;top:740.4px;width:40px;text-align:center;font-size:12px;-webkit-text-stroke:0;transform:rotate(-90deg)">15</div><div class="t" style="left:-5px;top:778.2px;width:40px;text-align:center;font-size:12px;-webkit-text-stroke:0;transform:rotate(-90deg)">16</div><div class="t" style="left:-5px;top:816.0px;width:40px;text-align:center;font-size:12px;-webkit-text-stroke:0;transform:rotate(-90deg)">17</div><div class="t" style="left:-5px;top:853.8px;width:40px;text-align:center;font-size:12px;-webkit-text-stroke:0;transform:rotate(-90deg)">18</div><div class="t" style="left:-5px;top:891.6px;width:40px;text-align:center;font-size:12px;-webkit-text-stroke:0;transform:rotate(-90deg)">19</div><div class="t" style="left:-5px;top:929.4px;width:40px;text-align:center;font-size:12px;-webkit-text-stroke:0;transform:rotate(-90deg)">20</div><div class="t" style="left:-5px;top:967.2px;width:40px;text-align:center;font-size:12px;-webkit-text-stroke:0;transform:rotate(-90deg)">21</div>
<div class="ab" style="left:27px;top:103px;width:950px;height:881px;background:#999;border-left:1px solid #111;border-top:1px solid #111"></div>
<div class="ab" style="left:65px;top:141px;width:798px;height:843px;background:#fff;border-left:1px solid #000;border-top:1px solid #000;border-right:3px solid #000"></div>
<div class="ab" style="left:142px;top:218px;width:1px;height:766px;background:#c0c0c0"></div>
<div class="ab" style="left:783px;top:218px;width:1px;height:766px;background:#c0c0c0"></div>
<div class="ab" style="left:142px;top:218px;width:642px;height:1px;background:#c0c0c0"></div>
<div class="ab" style="left:143px;top:219px;width:640px;height:28px;background:#dedefc"></div>
<div class="ab" style="left:142px;top:247px;width:642px;height:1px;background:#c0c0c0"></div>
<div class="t" style="left:142px;top:218px;font-size:28.8px;transform:scaleX(0.928);transform-origin:0 0">Testlektion eLML Kurs</div>
<div class="ab" style="left:143px;top:263px;width:640px;height:20px;background:#fff2c3"></div>
<div class="ab" style="left:142px;top:283px;width:642px;height:1px;background:#c0c0c0"></div>
<div class="t" style="left:142px;top:263px;font-size:19px;">Einführung</div>
<div class="t" style="left:142px;top:300px;font-size:16px;">In diesem Kurs lernt man einiges über eLML.</div>
<div class="ab" style="left:142px;top:336px;width:642px;height:47px;border:1px solid #000"></div>
<div class="ab" style="left:148px;top:341px;width:631px;height:36px;border:1px solid #c8c8c8"></div>
<div class="t" style="left:148px;top:342px;font-size:16px;font-weight:bold">Dokumentationen</div>
<div class="t" style="left:148px;top:360px;font-size:16px;font-weight:bold">Die Dokumentationen für den Kurs finden sich auf elml.ch</div>
<div class="ab" style="left:142px;top:408px;width:642px;height:1px;background:#c0c0c0"></div>
<div class="ab" style="left:143px;top:435px;width:640px;height:20px;background:#fff2c3"></div>
<div class="ab" style="left:142px;top:455px;width:642px;height:1px;background:#c0c0c0"></div>
<div class="t" style="left:142px;top:435px;font-size:19px;">Lernziele</div>
<div class="t" style="left:142px;top:472px;font-size:16px;">eLML Verstehen</div>
<div class="t" style="left:142px;top:501px;font-size:16px;">XML Grundlagen kennenlernen</div>
<div class="t" style="left:142px;top:530px;font-size:16px;">XSLT anwenden können</div>
<div class="ab" style="left:142px;top:547px;width:642px;height:1px;background:#c0c0c0"></div>
<div class="ab" style="left:143px;top:581px;width:640px;height:24px;background:#c1eab9"></div>
<div class="ab" style="left:142px;top:605px;width:642px;height:1px;background:#c0c0c0"></div>
<div class="t" style="left:142px;top:582px;font-size:23px;">Beispiel einer Unit</div>
<div class="ab" style="left:143px;top:622px;width:640px;height:19px;background:#fff2c3"></div>
<div class="ab" style="left:142px;top:641px;width:642px;height:1px;background:#c0c0c0"></div>
<div class="t" style="left:142px;top:621px;font-size:19px;">Einführung</div>
<div class="t" style="left:142px;top:659px;font-size:16px;">Was lernen wir in dieser Unit? Einiges über XML</div>
<div class="ab" style="left:142px;top:675px;width:642px;height:1px;background:#c0c0c0"></div>
<div class="ab" style="left:143px;top:702px;width:640px;height:20px;background:#fff2c3"></div>
<div class="ab" style="left:142px;top:722px;width:642px;height:1px;background:#c0c0c0"></div>
<div class="t" style="left:142px;top:701px;font-size:19px;">Lernziele</div>
<div class="t" style="left:142px;top:739px;font-size:16px;">XML Spezifikationen auswendlernen</div>
<div class="ab" style="left:142px;top:756px;width:642px;height:1px;background:#c0c0c0"></div>
<div class="ab" style="left:143px;top:782px;width:640px;height:22px;background:#fc9f9a"></div>
<div class="ab" style="left:142px;top:804px;width:642px;height:1px;background:#c0c0c0"></div>
<div class="t" style="left:142px;top:783px;font-size:20.1px;">LearningObject 1: XML Spezifikation 1.0</div>
<div class="ab" style="left:143px;top:827px;width:640px;height:19px;background:#fcc1aa"></div>
<div class="ab" style="left:142px;top:846px;width:642px;height:1px;background:#c0c0c0"></div>
<div class="t" style="left:142px;top:863px;font-size:16px;">Das W3C Konsortium ist für die Spezifikation von XML zuständig.</div>
<div class="t" style="left:142px;top:892px;font-size:16px;">Weitere Infos unter www.w3c.org</div>
<svg class="ab" style="left:0;top:0" width="994" height="1023" viewBox="0 0 994 1023"><polyline points="275.0,245.9 277.2,243.3 279.0,243.3 281.2,245.9 283.0,245.9 285.2,243.3 287.0,243.3 289.2,245.9 291.0,245.9 293.2,243.3 295.0,243.3 297.2,245.9 299.0,245.9 301.2,243.3 303.0,243.3 305.2,245.9 307.0,245.9 309.2,243.3 311.0,243.3 313.2,245.9 315.0,245.9 317.2,243.3 319.0,243.3 321.2,245.9 323.0,245.9 325.2,243.3 327.0,243.3 329.2,245.9 331.0,245.9 333.2,243.3 335.0,243.3 337.2,245.9 339.0,245.9 341.0,243.3 341.0,243.3 341.0,245.9" fill="none" stroke="#ff1a1a" stroke-width="1.1"/><polyline points="414.8,316.8 417.0,314.2 418.8,314.2 421.0,316.8 422.8,316.8 425.0,314.2 426.8,314.2 429.0,316.8 430.8,316.8 433.0,314.2 434.8,314.2 437.0,316.8 438.8,316.8 441.0,314.2 442.8,314.2 445.0,316.8 446.8,316.8 449.0,314.2 450.8,314.2 453.0,316.8 454.8,316.8 457.0,314.2 458.8,314.2 460.0,316.8" fill="none" stroke="#ff1a1a" stroke-width="1.1"/><polyline points="532.9,376.8 535.1,374.2 536.9,374.2 539.1,376.8 540.9,376.8 543.1,374.2 544.9,374.2 547.1,376.8 548.9,376.8 551.1,374.2 552.9,374.2 555.1,376.8 556.9,376.8 559.1,374.2 560.9,374.2 563.1,376.8 564.9,376.8 567.1,374.2 568.9,374.2 571.1,376.8 572.9,376.8 575.1,374.2 576.9,374.2 579.1,376.8 580.9,376.8 583.1,374.2 584.9,374.2 587.1,376.8" fill="none" stroke="#ff1a1a" stroke-width="1.1"/><polyline points="141.0,454.8 143.2,452.2 145.0,452.2 147.2,454.8 149.0,454.8 151.2,452.2 153.0,452.2 155.2,454.8 157.0,454.8 159.2,452.2 161.0,452.2 163.2,454.8 165.0,454.8 167.2,452.2 169.0,452.2 171.2,454.8 173.0,454.8 175.2,452.2 177.0,452.2 179.2,454.8 181.0,454.8 183.2,452.2 185.0,452.2 187.2,454.8 189.0,454.8 191.2,452.2 193.0,452.2 195.2,454.8 197.0,454.8 199.2,452.2 201.0,452.2 203.2,454.8 205.0,454.8 207.2,452.2 209.0,452.2 211.2,454.8 213.0,454.8 215.2,452.2 217.0,452.2 217.0,454.8" fill="none" stroke="#ff1a1a" stroke-width="1.1"/><polyline points="141.0,488.8 143.2,486.2 145.0,486.2 147.2,488.8 149.0,488.8 151.2,486.2 153.0,486.2 155.2,488.8 157.0,488.8 159.2,486.2 161.0,486.2 163.2,488.8 165.0,488.8 167.2,486.2 169.0,486.2 171.2,488.8 173.0,488.8 175.2,486.2 177.0,486.2 179.2,488.8" fill="none" stroke="#ff1a1a" stroke-width="1.1"/><polyline points="266.3,517.9 268.5,515.3 270.3,515.3 272.5,517.9 274.3,517.9 276.5,515.3 278.3,515.3 280.5,517.9 282.3,517.9 284.5,515.3 286.3,515.3 288.5,517.9 290.3,517.9 292.5,515.3 294.3,515.3 296.5,517.9 298.3,517.9 300.5,515.3 302.3,515.3 304.5,517.9 306.3,517.9 308.5,515.3 310.3,515.3 312.5,517.9 314.3,517.9 316.5,515.3 318.3,515.3 320.5,517.9 322.3,517.9 324.5,515.3 326.3,515.3 328.5,517.9 330.3,517.9 332.5,515.3 334.3,515.3 336.5,517.9 338.3,517.9 340.5,515.3 342.3,515.3 344.5,517.9 346.3,517.9 348.5,515.3 350.3,515.3 352.5,517.9 354.3,517.9 356.5,515.3 358.3,515.3 360.5,517.9 362.3,517.9 362.7,515.3 362.7,515.3 362.7,517.9" fill="none" stroke="#ff1a1a" stroke-width="1.1"/><polyline points="284.0,604.9 286.2,602.3 288.0,602.3 290.2,604.9 292.0,604.9 294.2,602.3 296.0,602.3 298.2,604.9 300.0,604.9 302.2,602.3 304.0,602.3 306.2,604.9 308.0,604.9 310.2,602.3 312.0,602.3 314.2,604.9 316.0,604.9 318.2,602.3 320.0,602.3 322.2,604.9" fill="none" stroke="#ff1a1a" stroke-width="1.1"/><polyline points="316.0,675.9 318.2,673.3 320.0,673.3 322.2,675.9 324.0,675.9 326.2,673.3 328.0,673.3 330.2,675.9 332.0,675.9 334.2,673.3 336.0,673.3 338.2,675.9 340.0,675.9 342.2,673.3 344.0,673.3 344.7,675.9" fill="none" stroke="#ff1a1a" stroke-width="1.1"/><polyline points="141.0,720.8 143.2,718.2 145.0,718.2 147.2,720.8 149.0,720.8 151.2,718.2 153.0,718.2 155.2,720.8 157.0,720.8 159.2,718.2 161.0,718.2 163.2,720.8 165.0,720.8 167.2,718.2 169.0,718.2 171.2,720.8 173.0,720.8 175.2,718.2 177.0,718.2 179.2,720.8 181.0,720.8 183.2,718.2 185.0,718.2 187.2,720.8 189.0,720.8 191.2,718.2 193.0,718.2 195.2,720.8 197.0,720.8 199.2,718.2 201.0,718.2 203.2,720.8 205.0,720.8 207.2,718.2 209.0,718.2 211.2,720.8 213.0,720.8 215.2,718.2 217.0,718.2 217.0,720.8" fill="none" stroke="#ff1a1a" stroke-width="1.1"/><polyline points="291.1,755.9 293.3,753.3 295.1,753.3 297.3,755.9 299.1,755.9 301.3,753.3 303.1,753.3 305.3,755.9 307.1,755.9 309.3,753.3 311.1,753.3 313.3,755.9 315.1,755.9 317.3,753.3 319.1,753.3 321.3,755.9 323.1,755.9 325.3,753.3 327.1,753.3 329.3,755.9 331.1,755.9 333.3,753.3 335.1,753.3 337.3,755.9 339.1,755.9 341.3,753.3 343.1,753.3 345.3,755.9 347.1,755.9 349.3,753.3 351.1,753.3 353.3,755.9 355.1,755.9 357.3,753.3 359.1,753.3 361.3,755.9 363.1,755.9 365.3,753.3 367.1,753.3 369.3,755.9 371.1,755.9 373.3,753.3 375.1,753.3 377.3,755.9 379.1,755.9 381.3,753.3 383.1,753.3 385.3,755.9 387.1,755.9 389.3,753.3 391.1,753.3 393.3,755.9 395.1,755.9 397.3,753.3 399.1,753.3 399.7,755.9" fill="none" stroke="#ff1a1a" stroke-width="1.1"/><polyline points="141.0,803.8 143.2,801.2 145.0,801.2 147.2,803.8 149.0,803.8 151.2,801.2 153.0,801.2 155.2,803.8 157.0,803.8 159.2,801.2 161.0,801.2 163.2,803.8 165.0,803.8 167.2,801.2 169.0,801.2 171.2,803.8 173.0,803.8 175.2,801.2 177.0,801.2 179.2,803.8 181.0,803.8 183.2,801.2 185.0,801.2 187.2,803.8 189.0,803.8 191.2,801.2 193.0,801.2 195.2,803.8 197.0,803.8 199.2,801.2 201.0,801.2 203.2,803.8 205.0,803.8 207.2,801.2 209.0,801.2 211.2,803.8 213.0,803.8 215.2,801.2 217.0,801.2 219.2,803.8 221.0,803.8 223.2,801.2 225.0,801.2 227.2,803.8 229.0,803.8 231.2,801.2 233.0,801.2 235.2,803.8 237.0,803.8 238.0,801.2 238.0,801.2 238.0,803.8" fill="none" stroke="#ff1a1a" stroke-width="1.1"/><rect x="142" y="782" width="1.6" height="22" fill="#102a3a"/></svg>
<div class="ab" style="left:261px;top:150px;width:698px;height:52px;background:#fff;border:2px solid #bdbdbd;box-shadow:0 5px 9px rgba(0,0,0,.38)"></div>
<div class="ab" style="left:265px;top:154px;width:691px;height:18px;background:#b3b3b3"></div>
<div class="ab" style="left:265px;top:172px;width:691px;height:27px;background:linear-gradient(#f6f6f6,#ececec)"></div>
<div class="t" style="left:267px;top:158px;font-size:12px;color:#111">ElmlEditor</div>
<div class="t" style="left:295.2px;top:179px;font-size:13px;color:#111;-webkit-text-stroke:0.05px #111;transform:scaleX(1.075);transform-origin:0 0">&lt;unit&gt;</div>
<div class="t" style="left:342.7px;top:179px;font-size:13px;color:#111;-webkit-text-stroke:0.05px #111;transform:scaleX(0.970);transform-origin:0 0">&lt;lObject&gt;</div>
<div class="t" style="left:406.79999999999995px;top:179px;font-size:13px;color:#111;-webkit-text-stroke:0.05px #111;transform:scaleX(0.998);transform-origin:0 0">&lt;clarify&gt;</div>
<div class="t" style="left:465.9px;top:179px;font-size:13px;color:#111;-webkit-text-stroke:0.05px #111;transform:scaleX(1.026);transform-origin:0 0">&lt;look&gt;</div>
<div class="t" style="left:515.9px;top:179px;font-size:13px;color:#111;-webkit-text-stroke:0.05px #111;transform:scaleX(1.025);transform-origin:0 0">&lt;act&gt;</div>
<div class="t" style="left:559.3px;top:179px;font-size:13px;color:#111;-webkit-text-stroke:0.05px #111;transform:scaleX(0.948);transform-origin:0 0">&lt;summary&gt;</div>
<div class="t" style="left:634.3px;top:179px;font-size:13px;color:#111;-webkit-text-stroke:0.05px #111;transform:scaleX(0.990);transform-origin:0 0">&lt;bibEntry&gt;</div>
<div class="t" style="left:714.3px;top:179px;font-size:13px;color:#111;-webkit-text-stroke:0.05px #111;transform:scaleX(0.974);transform-origin:0 0">&lt;term&gt;</div>
<div class="t" style="left:765.1px;top:179px;font-size:13px;color:#111;-webkit-text-stroke:0.05px #111;transform:scaleX(0.987);transform-origin:0 0">&lt;box&gt;</div>
<div class="t" style="left:811.4px;top:179px;font-size:13px;color:#111;-webkit-text-stroke:0.05px #111;transform:scaleX(1.007);transform-origin:0 0">&lt;citation&gt;</div>
<div class="ab" style="left:706px;top:179px;width:1px;height:13px;background:#d0d0d0"></div>
<div class="ab" style="left:878px;top:179px;width:1px;height:13px;background:#d0d0d0"></div>
<svg class="ab" style="left:0;top:0" width="994" height="220" viewBox="0 0 994 220"><path d="M925 160H932.5L928.75 164.2Z" fill="#000"/><path d="M942.5 159L950 166M950 159L942.5 166" stroke="#000" stroke-width="1.8"/><path d="M274.5 178.5H282L284.5 181V191.5H274.5Z" fill="#fff" stroke="#8094c0" stroke-width="1"/><path d="M274.5 191.5H284.5V181" stroke="#2a3a60" stroke-width="1.6" fill="none"/><circle cx="283" cy="180" r="1.2" fill="#fff" stroke="#2a3a60" stroke-width=".6"/><path d="M888.5 178.5H896L898.5 181V191.5H888.5Z" fill="#fff" stroke="#8094c0" stroke-width="1"/><path d="M888.5 191.5H898.5V181" stroke="#2a3a60" stroke-width="1.6" fill="none"/><circle cx="897" cy="180" r="1.2" fill="#fff" stroke="#2a3a60" stroke-width=".6"/><path d="M890.5 186L893 189L897 181.5" stroke="#2030d0" stroke-width="1.5" fill="none"/><path d="M911.5 178.5H919L921.5 181V191.5H911.5Z" fill="#fff" stroke="#8094c0" stroke-width="1"/><path d="M911.5 191.5H921.5V181" stroke="#2a3a60" stroke-width="1.6" fill="none"/><circle cx="920" cy="180" r="1.2" fill="#fff" stroke="#2a3a60" stroke-width=".6"/><path d="M913.5 183.5L918 189M918 183.5L913.5 189" stroke="#ee3010" stroke-width="1.3"/><path d="M934.5 178.5H942L944.5 181V191.5H934.5Z" fill="#fff" stroke="#8094c0" stroke-width="1"/><path d="M934.5 191.5H944.5V181" stroke="#2a3a60" stroke-width="1.6" fill="none"/><circle cx="943" cy="180" r="1.2" fill="#fff" stroke="#2a3a60" stroke-width=".6"/><path d="M936 182L943 185.5L936 189Z" fill="#20b020"/></svg>
<div class="ab" style="left:977px;top:77px;width:17px;height:907px;background:#ececec"></div>
<div class="ab" style="left:977px;top:77px;width:15px;height:826px;border-radius:0 0 7px 7px;background:linear-gradient(90deg,#bdbdbd,#e6e6e6 35%,#f8f8f8 70%,#fdfdfd)"></div>
<div class="ab" style="left:978px;top:84px;width:13px;height:203px;border-radius:6.5px;background:linear-gradient(90deg,#0c3cc0 0,#2a64d8 10%,#8db6ec 25%,#7fb0f0 40%,#4a8ef0 55%,#8fd0ff 80%,#a8e4ff 90%,#4a78d0 100%);box-shadow:inset 0 -2px 2px rgba(0,20,120,.5), 1px 0 1px rgba(0,0,0,.35)"></div>
<svg class="ab" style="left:960px;top:880px" width="34" height="110" viewBox="960 880 34 110"><rect x="977" y="903" width="15" height="32" fill="#f4f4f4"/><rect x="977" y="903" width="3" height="32" fill="#e0e0e0"/><rect x="977" y="919" width="15" height="1" fill="#d8d8d8"/><path d="M981 914H988L984.5 908.5Z" fill="#555"/><path d="M981 924.5H988L984.5 930.5Z" fill="#555"/><rect x="977.5" y="936.5" width="14" height="13.5" fill="#f6f6f6" stroke="#8a8a8a" stroke-width="1.2"/><rect x="977.5" y="952.5" width="14" height="13.5" fill="#f6f6f6" stroke="#8a8a8a" stroke-width="1.2"/><rect x="977.5" y="968.5" width="14" height="13.5" fill="#f6f6f6" stroke="#8a8a8a" stroke-width="1.2"/><path d="M981.5 942.5L984.5 939.5L987.5 942.5ZM981.5 947L984.5 944L987.5 947Z" fill="#000"/><path d="M981.5 972L984.5 975L987.5 972ZM981.5 976.5L984.5 979.5L987.5 976.5Z" fill="#000"/><circle cx="985.5" cy="960.3" r="3.6" fill="#5a5aee" stroke="#3030a0" stroke-width=".5"/><circle cx="984.5" cy="959" r="1.3" fill="#b8b8ff"/></svg>
<div class="ab" style="left:1px;top:984px;width:976px;height:16px;background:linear-gradient(#a9a9a9,#d8d8d8 30%,#f4f4f4 65%,#fbfbfb)"></div>
<div class="ab" style="left:0;top:1000px;width:977px;height:1px;background:#fdfdfd"></div>
<div class="ab" style="left:0;top:1001px;width:994px;height:22px;background:#ececec"></div>
<div class="ab" style="left:4px;top:1004px;width:208px;height:19px;border-top:1px solid #a0a0a0;border-left:1px solid #c4c4c4;border-right:1px solid #fafafa"></div>
<div class="t" style="left:9px;top:1009px;font-size:12px;color:#111">Page 1 / 3</div>
<div class="ab" style="left:217px;top:1004px;width:233px;height:19px;border-top:1px solid #a0a0a0;border-left:1px solid #c4c4c4;border-right:1px solid #fafafa"></div>
<div class="t" style="left:222px;top:1009px;font-size:12px;color:#111">Default</div>
<div class="ab" style="left:455px;top:1004px;width:43px;height:19px;border-top:1px solid #a0a0a0;border-left:1px solid #c4c4c4;border-right:1px solid #fafafa"></div>
<div class="t" style="left:455px;top:1009px;width:43px;text-align:center;font-size:12px;letter-spacing:0.15px;color:#111">100%</div>
<div class="ab" style="left:503px;top:1004px;width:45px;height:19px;border-top:1px solid #a0a0a0;border-left:1px solid #c4c4c4;border-right:1px solid #fafafa"></div>
<div class="t" style="left:503px;top:1009px;width:45px;text-align:center;font-size:12px;letter-spacing:0.15px;color:#111">INSRT</div>
<div class="ab" style="left:553px;top:1004px;width:38px;height:19px;border-top:1px solid #a0a0a0;border-left:1px solid #c4c4c4;border-right:1px solid #fafafa"></div>
<div class="t" style="left:553px;top:1009px;width:38px;text-align:center;font-size:12px;letter-spacing:0.15px;color:#111">STD</div>
<div class="ab" style="left:596px;top:1004px;width:30px;height:19px;border-top:1px solid #a0a0a0;border-left:1px solid #c4c4c4;border-right:1px solid #fafafa"></div>
<div class="t" style="left:596px;top:1009px;width:30px;text-align:center;font-size:12px;letter-spacing:0.15px;color:#111">HYP</div>
<div class="ab" style="left:631px;top:1004px;width:18px;height:19px;border-top:1px solid #a0a0a0;border-left:1px solid #c4c4c4;border-right:1px solid #fafafa"></div>
<div class="t" style="left:631px;top:1009px;width:18px;text-align:center;font-size:12px;letter-spacing:0.15px;color:#111">*</div>
<div class="ab" style="left:653px;top:1004px;width:24px;height:19px;border-top:1px solid #a0a0a0;border-left:1px solid #c4c4c4;border-right:1px solid #fafafa"></div>
<div class="t" style="left:653px;top:1009px;width:24px;text-align:center;font-size:12px;letter-spacing:0.15px;color:#111"></div>
<div class="ab" style="left:682px;top:1004px;width:307px;height:19px;border-top:1px solid #a0a0a0;border-left:1px solid #c4c4c4;border-right:1px solid #fafafa"></div>
<div class="t" style="left:682px;top:1009px;width:307px;text-align:center;font-size:12px;letter-spacing:0.15px;color:#111">read-only : xmlspez : Level 3</div>
<svg class="ab" style="left:980px;top:1008px" width="14" height="15" viewBox="0 0 14 15"><rect x="0.5" y="0.5" width="14" height="15" fill="#fff" stroke="#d0d0d0"/><path d="M3 14L14 3M7 14L14 7M11 14L14 11" stroke="#808080" stroke-width="1"/></svg>
</body></html>
